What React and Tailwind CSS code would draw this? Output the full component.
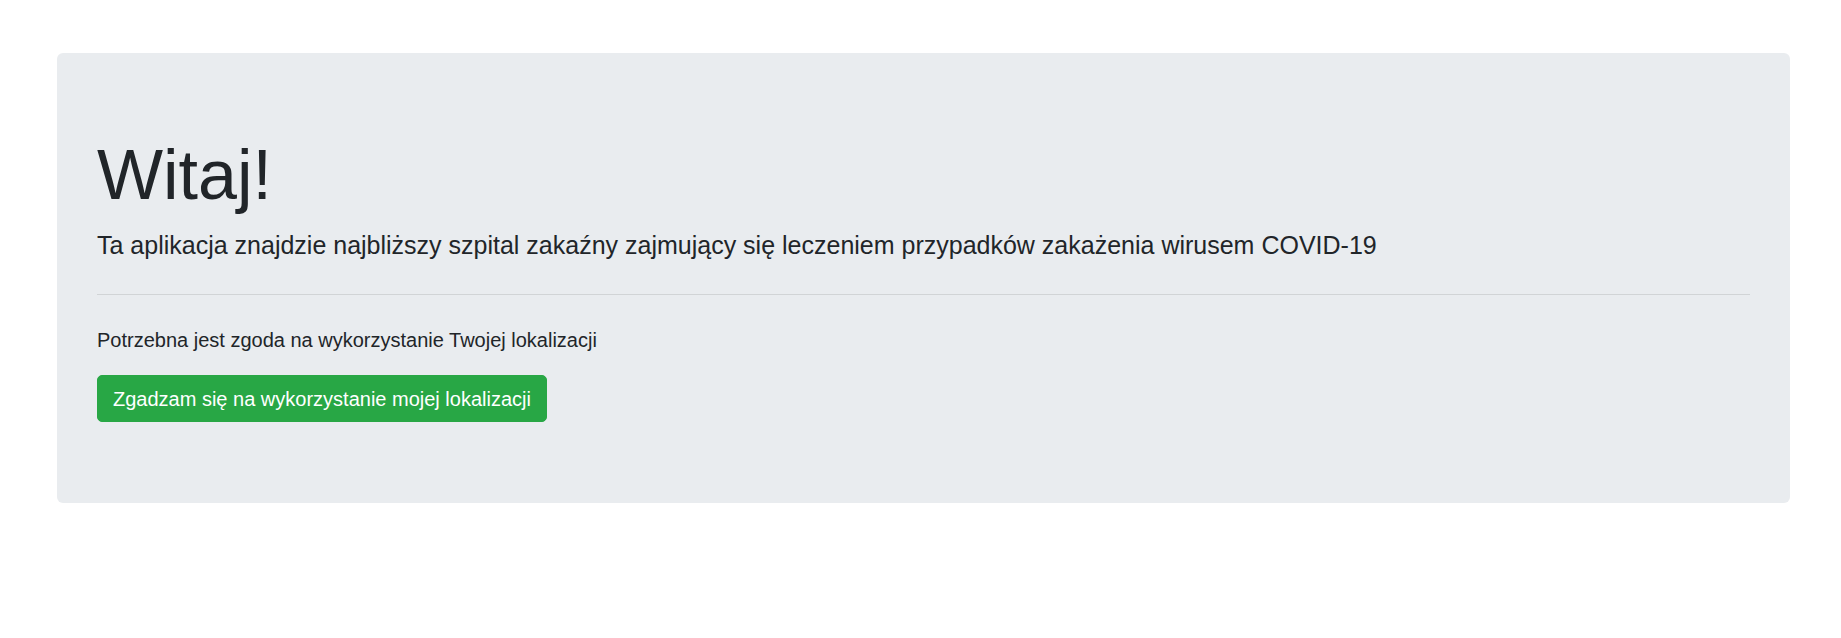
export default function App() {
  return (
    <div className="w-[1841px] min-h-[638px] bg-white pt-[53px] font-['Liberation_Sans',Arial,sans-serif] text-[#212529]">
      <div className="ml-[57px] w-[1733px] rounded-[6px] bg-[#e9ecef] px-[40px] pt-[80px] pb-[80.5px]">
        <h1 className="mb-[10px] text-[70px] font-light leading-[1.2]">Witaj!</h1>
        <p className="text-[25px] leading-[37px]">
          Ta aplikacja znajdzie najbliższy szpital zakaźny zajmujący się leczeniem przypadków zakażenia wirusem COVID-19
        </p>
        <hr className="my-[30px] border-0 border-t border-[rgba(0,0,0,0.1)]" />
        <p className="mb-[20px] text-[20px] leading-[30px]">Potrzebna jest zgoda na wykorzystanie Twojej lokalizacji</p>
        <button className="rounded-[5px] border border-[#28a745] bg-[#28a745] px-[15px] py-[7.5px] text-[20px] leading-[30px] text-white">
          Zgadzam się na wykorzystanie mojej lokalizacji
        </button>
      </div>
    </div>
  );
}
